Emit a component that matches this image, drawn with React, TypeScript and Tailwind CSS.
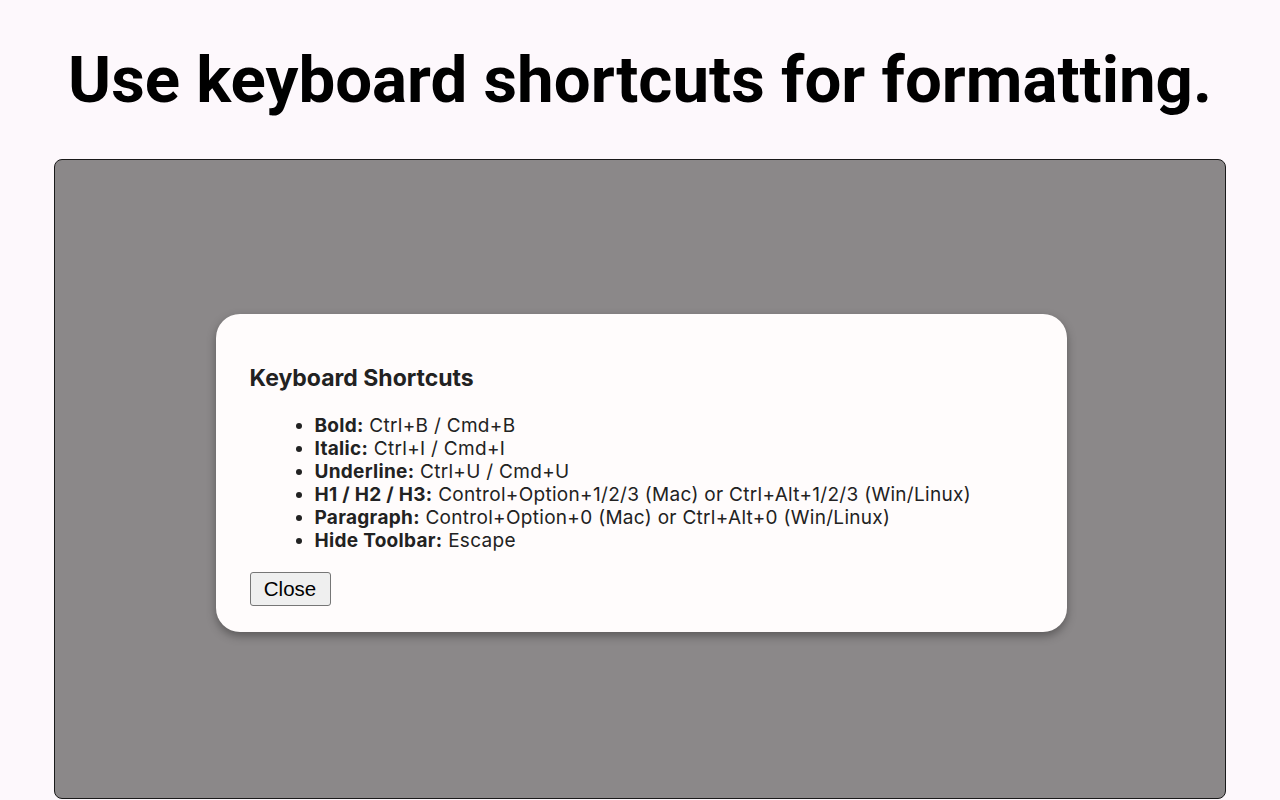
import React from 'react';

const shortcuts = [
    { label: 'Bold:', keys: 'Ctrl+B / Cmd+B' },
    { label: 'Italic:', keys: 'Ctrl+I / Cmd+I' },
    { label: 'Underline:', keys: 'Ctrl+U / Cmd+U' },
    { label: 'H1 / H2 / H3:', keys: 'Control+Option+1/2/3 (Mac) or Ctrl+Alt+1/2/3 (Win/Linux)' },
    { label: 'Paragraph:', keys: 'Control+Option+0 (Mac) or Ctrl+Alt+0 (Win/Linux)' },
    { label: 'Hide Toolbar:', keys: 'Escape' },
];

export default function App() {
    return (
        <div className="w-[1280px] h-[800px] overflow-hidden bg-[#fdf8fc] flex flex-col items-center">
            {/* Page heading */}
            <h1 className="mt-[38px] h-[84px] text-[65.4px] leading-[84px] font-bold text-black font-['Roboto',sans-serif]">
                Use keyboard shortcuts for formatting.
            </h1>

            {/* Backdrop panel */}
            <div className="mt-[37px] w-[1172px] h-[640px] bg-[#8b8889] border border-[#1a1a1a] rounded-lg flex items-center justify-center pb-[13px] pl-[2px]">
                {/* Modal */}
                <div className="w-[851px] bg-[#fffcfc] rounded-[24px] shadow-[0_4px_10px_rgba(0,0,0,0.35)] px-[34px] pt-[49px] pb-[26px] text-[#222] font-['Inter','Liberation_Sans',sans-serif]">
                    <h3 className="text-[23px] leading-[30px] font-bold">Keyboard Shortcuts</h3>
                    <ul className="mt-[21px] pl-[65px] list-disc text-[19px] leading-[23px] tracking-[0.3px]">
                        {shortcuts.map(s => (
                            <li key={s.label}>
                                <strong className="font-bold">{s.label}</strong> {s.keys}
                            </li>
                        ))}
                    </ul>
                    <button className="mt-[20px] h-[34px] w-[81px] bg-[#efefef] border border-[#767676] rounded-[3px] text-[20.5px] leading-[24px] text-black font-['Liberation_Sans',sans-serif]">
                        Close
                    </button>
                </div>
            </div>
        </div>
    );
}
